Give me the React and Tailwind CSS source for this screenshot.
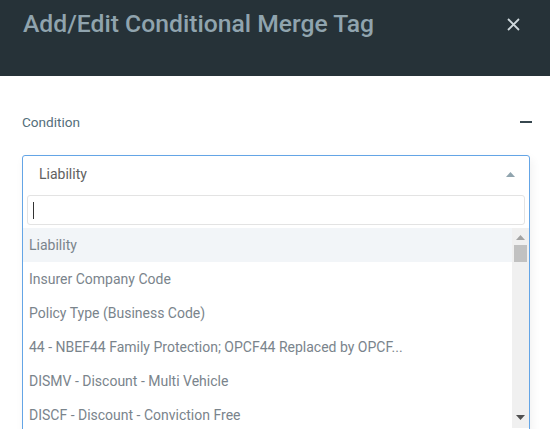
import { ChevronUp } from 'lucide-react'

const options = [
  'Liability',
  'Insurer Company Code',
  'Policy Type (Business Code)',
  '44 - NBEF44 Family Protection; OPCF44 Replaced by OPCF...',
  'DISMV - Discount - Multi Vehicle',
  'DISCF - Discount - Conviction Free',
]

function Caret({ down = false, className = '' }) {
  return (
    <svg width="9" height="5" viewBox="0 0 9 5" className={className}>
      <path d={down ? 'M0 0H9L4.5 5Z' : 'M4.5 0L9 5H0Z'} fill="currentColor" />
    </svg>
  )
}

export default function App() {
  return (
    <div
      className="w-[550px] h-[429px] overflow-hidden bg-white"
      style={{ fontFamily: 'Roboto, "Liberation Sans", sans-serif' }}
    >
      <header className="h-[76px] bg-[#263238] flex items-start justify-between pl-[23px] pr-[29px] pt-[6px]">
        <h1 className="text-[24.7px] leading-[35px] font-medium text-[#90a4ae]">Add/Edit Conditional Merge Tag</h1>
        <button className="mt-[11px] text-[#cfd8dc]">
          <svg width="15" height="15" viewBox="0 0 15 15">
            <path d="M2 2L13 13M13 2L2 13" stroke="currentColor" strokeWidth="1.8" />
          </svg>
        </button>
      </header>

      <div className="px-[22px] pt-[37px]">
        <div className="flex items-center justify-between h-[18px]">
          <span className="text-[13.6px] text-[#546e7a]">Condition</span>
          <span className="block w-[12px] h-[2px] bg-[#37474f] mr-[-4px]" />
        </div>

        <div className="mt-[24px] w-[508px] border border-[#64a5e6] rounded-[3px] shadow-[2px_4px_10px_rgba(0,0,0,0.06)]">
          <div className="h-[36px] flex items-center justify-between pl-[16px] pr-[14px]">
            <span className="text-[14px] text-[#616161]">Liability</span>
            <Caret className="text-[#90a4ae]" />
          </div>
          <div className="px-[4px] pt-[3px] pb-[3px]">
            <div className="h-[30px] border border-[#e3e3e3] rounded-[3px] flex items-center pl-[5px]">
              <span className="block w-px h-[17px] bg-[#333]" />
            </div>
          </div>
          <div className="flex">
            <ul className="flex-1">
              {options.map((o, i) => (
                <li
                  key={o}
                  className={`h-[34px] flex items-center pl-[6px] text-[14px] text-[#7a848c] ${i === 0 ? 'bg-[#f2f5f8]' : ''}`}
                >
                  {o}
                </li>
              ))}
            </ul>
            <div className="w-[17px] bg-[#f0f0f0] flex flex-col items-center h-[200px]">
              <Caret className="text-[#a3a3a3] mt-[7px]" />
              <div className="w-[13px] h-[17px] bg-[#c1c1c1] mt-[5px]" />
              <div className="flex-1" />
              <Caret down className="text-[#505050] mb-[8px]" />
            </div>
          </div>
        </div>
      </div>
    </div>
  )
}
